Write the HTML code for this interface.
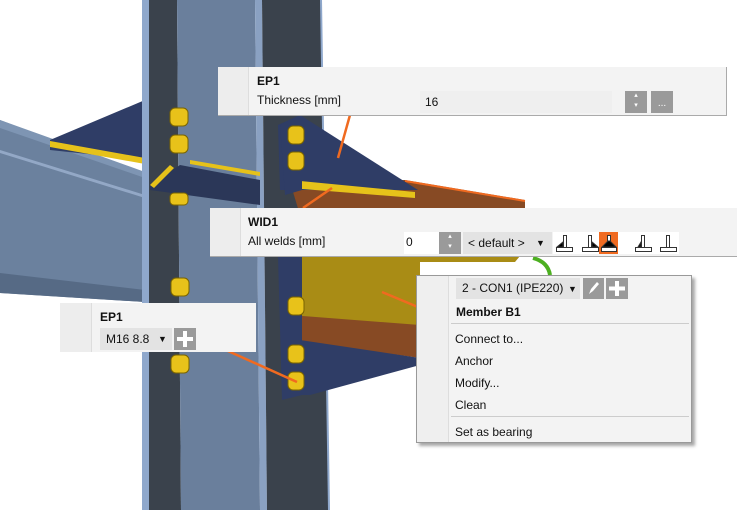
<!DOCTYPE html>
<html><head><meta charset="utf-8"><style>
*{margin:0;padding:0;box-sizing:border-box}
body{width:737px;height:510px;overflow:hidden;background:#fff;position:relative;font-family:"Liberation Sans",sans-serif;font-size:12px;color:#111}
svg.bg{position:absolute;left:0;top:0}
.panel{position:absolute;background:#f3f3f3;border-right:1px solid #aaa;border-bottom:1px solid #aaa}
.strip{position:absolute;left:0;top:0;bottom:0;width:31px;background:#ededed;border-right:1px solid #ddd}
.t{position:absolute;white-space:nowrap}
.b{font-weight:bold}
.box{position:absolute}
.arr{position:absolute;font-size:9px}
</style></head><body>
<svg class="bg" width="737" height="510" viewBox="0 0 737 510">
<polygon points="0,120 145,175 145,302 0,293" fill="#6b819e"/>
<polygon points="0,120 145,172 145,178 0,128" fill="#7e95b3"/>
<polygon points="0,150 145,195 145,198 0,153" fill="#93a8c6"/>
<polygon points="0,273 145,290 145,302 0,293" fill="#566a85"/>
<polygon points="50,140 145,100 145,160 50,150" fill="#2f3d66"/>
<polygon points="50,141 145,158 145,164 50,147" fill="#e6c21a"/>
<polygon points="142,0 149,0 149,510 142,510" fill="#8fa8cc"/>
<polygon points="149,0 177,0 181,510 149,510" fill="#3a424c"/>
<polygon points="177,0 255,0 260,510 181,510" fill="#6a7f9c"/>
<polygon points="255,0 262,0 267,510 260,510" fill="#8aa1c2"/>
<polygon points="262,0 321,0 329,510 267,510" fill="#3a424c"/>
<line x1="321" y1="0" x2="329" y2="510" stroke="#8fa8cc" stroke-width="2"/>
<polygon points="150,185 180,165 260,180 260,205 150,190" fill="#2b3758"/>
<polygon points="190,160 260,172 260,176 190,164" fill="#e6c21a"/>
<polygon points="150,185 170,165 174,168 154,188" fill="#e6c21a"/>
<polygon points="290,182 405,180 525,200 525,210 300,215" fill="#874a24"/>
<line x1="405" y1="181" x2="525" y2="201" stroke="#f06a20" stroke-width="2"/>
<polygon points="278,125 300,115 418,190 280,190" fill="#2f3d66"/>
<polygon points="290,180 415,192 415,198 290,188" fill="#e6c21a"/>
<polygon points="280,125 302,115 302,190 285,195" fill="#2f3d66"/>
<polygon points="300,256 420,256 420,335 300,330" fill="#a98c15"/>
<polygon points="330,256 520,256 515,262 330,262" fill="#a98c15"/>
<polygon points="290,315 420,325 420,358 290,340" fill="#874a24"/>
<polygon points="278,256 302,256 302,395 282,400" fill="#2f3d66"/>
<polygon points="300,340 420,358 420,365 310,395 300,395" fill="#2f3d66"/>
<path d="M533,258 Q548,262 550,275" stroke="#4caf20" stroke-width="4" fill="none"/>
<g fill="#e8c21a" stroke="#7a6400" stroke-width="1">
<rect x="170" y="108" width="18" height="18" rx="5"/>
<rect x="170" y="135" width="18" height="18" rx="5"/>
<rect x="170" y="193" width="18" height="12" rx="4"/>
<rect x="171" y="278" width="18" height="18" rx="5"/>
<rect x="171" y="355" width="18" height="18" rx="5"/>
<rect x="288" y="126" width="16" height="18" rx="5"/>
<rect x="288" y="152" width="16" height="18" rx="5"/>
<rect x="288" y="297" width="16" height="18" rx="5"/>
<rect x="288" y="345" width="16" height="18" rx="5"/>
<rect x="288" y="372" width="16" height="18" rx="5"/>
</g>
<g stroke="#f06a20" stroke-width="2.5">
<line x1="350" y1="115" x2="338" y2="158"/>
<line x1="332" y1="188" x2="303" y2="208"/>
<line x1="382" y1="292" x2="425" y2="310"/>
<line x1="228" y1="351" x2="297" y2="382"/>
</g>
</svg>

<div class="panel" style="left:218px;top:67px;width:509px;height:49px">
<div class="strip"></div>
<div class="t b" style="left:39px;top:7px">EP1</div>
<div class="t" style="left:39px;top:26px">Thickness [mm]</div>
<div class="box" style="left:202px;top:24px;width:192px;height:22px;background:#efefef"></div>
<div class="t" style="left:207px;top:28px">16</div>
<div class="box" style="left:407px;top:24px;width:22px;height:22px;background:#9a9a9a;color:#fff;font-size:7px;text-align:center;line-height:10px">▴<br>▾</div>
<div class="box" style="left:433px;top:24px;width:22px;height:22px;background:#9a9a9a;color:#fff;text-align:center;line-height:26px;font-size:10px">...</div>
</div>

<div class="panel" style="left:210px;top:208px;width:527px;height:49px;border-right:none">
<div class="strip"></div>
<div class="t b" style="left:38px;top:7px">WID1</div>
<div class="t" style="left:38px;top:26px">All welds [mm]</div>
<div class="box" style="left:194px;top:24px;width:35px;height:22px;background:#fff"></div>
<div class="t" style="left:196px;top:27px">0</div>
<div class="box" style="left:229px;top:24px;width:22px;height:22px;background:#9a9a9a;color:#fff;font-size:7px;text-align:center;line-height:10px">▴<br>▾</div>
<div class="box" style="left:253px;top:24px;width:89px;height:22px;background:#e3e3e3"></div>
<div class="t" style="left:258px;top:28px">&lt; default &gt;</div>
<div class="arr" style="left:326px;top:30px">▼</div>
<div class="box" style="left:343px;top:24px;width:126px;height:22px;background:#fff"></div>
<svg class="box" style="left:343px;top:24px" width="126" height="22">
<g stroke="#333" fill="#fff" stroke-width="1">
<rect x="3.5" y="15.5" width="16" height="4"/><rect x="10.5" y="3.5" width="3" height="12"/><polygon points="4,15 10,15 10,10" fill="#000"/>
<rect x="29.5" y="15.5" width="16" height="4"/><rect x="35.5" y="3.5" width="3" height="12"/><polygon points="39,15 45,15 39,10" fill="#000"/>
</g>
<rect x="46" y="0" width="19" height="22" fill="#f06a20"/>
<g stroke="#333" fill="#fff" stroke-width="1">
<rect x="48.5" y="15.5" width="15" height="4"/><rect x="54.5" y="3.5" width="3" height="12"/><polygon points="49,15 63,15 57,9 55,9" fill="#000"/>
<rect x="82.5" y="15.5" width="16" height="4"/><rect x="88.5" y="3.5" width="3" height="12"/><polygon points="88,15 88,10 85,15" fill="#000"/>
<rect x="107.5" y="15.5" width="16" height="4"/><rect x="113.5" y="3.5" width="3" height="12"/>
</g>
</svg>
</div>

<div class="panel" style="left:416px;top:275px;width:276px;height:168px;border:1px solid #999;box-shadow:3px 3px 3px rgba(0,0,0,.35)">
<div class="strip" style="width:32px;background:#efefef"></div>
<div class="box" style="left:39px;top:2px;width:124px;height:21px;background:#e3e3e3"></div>
<div class="t" style="left:45px;top:5px">2 - CON1 (IPE220)</div>
<div class="arr" style="left:151px;top:8px">▼</div>
<div class="box" style="left:166px;top:2px;width:21px;height:21px;background:#9a9a9a"></div>
<svg class="box" style="left:166px;top:2px" width="21" height="21"><path d="M6,16 L8,11 L14,4 L16,6 L10,13 Z" fill="#fff"/></svg>
<div class="box" style="left:189px;top:2px;width:22px;height:21px;background:#9a9a9a"></div>
<svg class="box" style="left:189px;top:2px" width="22" height="21"><path d="M11,3V18M3,10.5H19" stroke="#fff" stroke-width="4"/></svg>
<div class="t b" style="left:39px;top:29px">Member B1</div>
<div class="box" style="left:34px;top:47px;width:238px;height:1px;background:#ccc"></div>
<div class="t" style="left:38px;top:56px">Connect to...</div>
<div class="t" style="left:38px;top:78px">Anchor</div>
<div class="t" style="left:38px;top:100px">Modify...</div>
<div class="t" style="left:38px;top:122px">Clean</div>
<div class="box" style="left:34px;top:140px;width:238px;height:1px;background:#ccc"></div>
<div class="t" style="left:38px;top:149px">Set as bearing</div>
</div>

<div class="panel" style="left:60px;top:303px;width:196px;height:49px;border:none">
<div class="strip" style="width:32px"></div>
<div class="t b" style="left:40px;top:7px">EP1</div>
<div class="box" style="left:40px;top:25px;width:72px;height:22px;background:#e3e3e3"></div>
<div class="t" style="left:46px;top:29px">M16 8.8</div>
<div class="arr" style="left:98px;top:31px">▼</div>
<div class="box" style="left:114px;top:25px;width:22px;height:22px;background:#9a9a9a"></div>
<svg class="box" style="left:114px;top:25px" width="22" height="22"><path d="M11,3V19M3,11H19" stroke="#fff" stroke-width="4"/></svg>
</div>
</body></html>
